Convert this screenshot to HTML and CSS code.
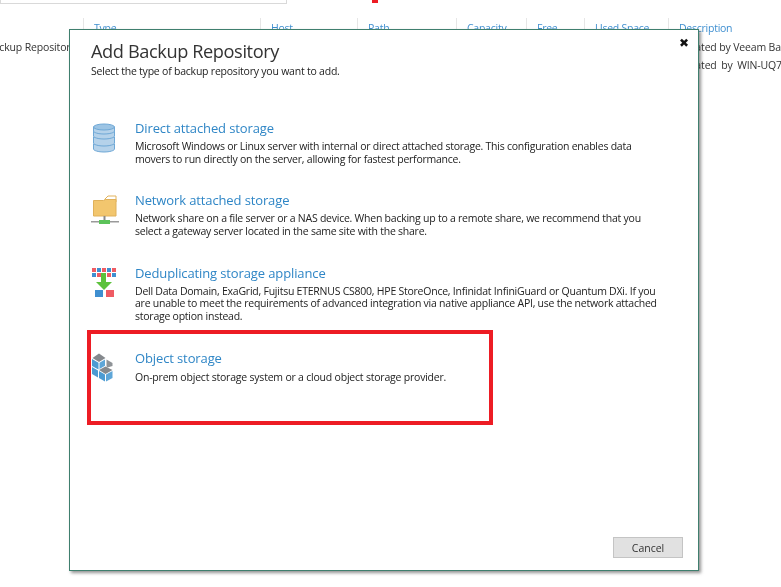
FILE: index.html
```html
<!DOCTYPE html>
<html lang="en">
<head>
<meta charset="utf-8">
<title>Add Backup Repository</title>
<link rel="stylesheet" href="styles.css">
</head>
<body>
<div class="page">
  <div class="topbar">
    <div class="search"></div>
    <div class="mark"></div>
  </div>
  <div class="table">
    <div class="head">
      <div class="spacer"></div>
      <div class="th">Type</div>
      <div class="th">Host</div>
      <div class="th">Path</div>
      <div class="th">Capacity</div>
      <div class="th">Free</div>
      <div class="th">Used Space</div>
      <div class="th">Description</div>
    </div>
    <div class="row">
      <div class="name">Backup Repository</div>
      <div class="desc-cell">Created by Veeam Backup</div>
    </div>
    <div class="row">
      <div class="name"></div>
      <div class="desc-cell wide">Created by WIN-UQ7</div>
    </div>
  </div>

  <div class="dialog">
    <div class="close">&#10006;</div>
    <h1 class="title">Add Backup Repository</h1>
    <p class="subtitle">Select the type of backup repository you want to add.</p>

    <div class="options">
      <div class="option">
        <svg class="icon" width="28" height="30" viewBox="0 0 28 30">
          <g fill="#b5d2ea" stroke="#6fa8d6" stroke-width="1">
            <path d="M2.500 21v5c0 1.600 4.800 3 10.500 3s10.500-1.400 10.500-3v-5z"/>
            <path d="M2.500 14v6c0 1.600 4.800 3 10.500 3s10.500-1.400 10.500-3v-6z"/>
            <path d="M2.500 7v6c0 1.600 4.800 3 10.500 3s10.500-1.400 10.500-3V7z"/>
            <path d="M2.500 4v4c0 1.600 4.800 3 10.500 3s10.500-1.400 10.500-3V4z"/>
            <ellipse cx="13" cy="4" rx="10.500" ry="3" fill="#9cc4e4"/>
          </g>
        </svg>
        <div class="text">
          <div class="name-link">Direct attached storage</div>
          <p class="desc">Microsoft Windows or Linux server with internal or direct attached storage. This configuration enables data<br>movers to run directly on the server, allowing for fastest performance.</p>
        </div>
      </div>

      <div class="option">
        <svg class="icon" width="28" height="30" viewBox="0 0 28 30">
          <path d="M14 4l3-3h8v6H14z" fill="#fff" stroke="#e2b35c" stroke-width="1"/>
          <path d="M2.500 5.500h10l2-1h10.500v16.500H2.500z" fill="#f2c66e" stroke="#e0b15a" stroke-width="1"/>
          <rect x="0" y="26" width="28" height="1.500" fill="#9a9a9a"/>
          <rect x="12.500" y="21" width="2" height="5" fill="#8a8a8a"/>
          <rect x="8" y="25" width="11" height="4" fill="#5cc35a"/>
        </svg>
        <div class="text">
          <div class="name-link">Network attached storage</div>
          <p class="desc">Network share on a file server or a NAS device. When backing up to a remote share, we recommend that you<br>select a gateway server located in the same site with the share.</p>
        </div>
      </div>

      <div class="option">
        <svg class="icon" width="28" height="30" viewBox="0 0 28 30">
          <g fill="#ef5b63">
            <rect x="1" y="0" width="4" height="4"/><rect x="11" y="0" width="4" height="4"/><rect x="21" y="0" width="4" height="4"/>
            <rect x="6" y="5" width="4" height="4"/><rect x="16" y="5" width="4" height="4"/>
            <rect x="15" y="22" width="8" height="7"/>
          </g>
          <g fill="#3f8fd0">
            <rect x="6" y="0" width="4" height="4"/><rect x="16" y="0" width="4" height="4"/>
            <rect x="1" y="5" width="4" height="4"/><rect x="11" y="5" width="4" height="4"/><rect x="21" y="5" width="4" height="4"/>
            <rect x="4" y="22" width="8" height="7"/>
          </g>
          <path d="M10 5h5v9h6l-8 8L5 14h5z" fill="#5cc23c"/>
        </svg>
        <div class="text">
          <div class="name-link">Deduplicating storage appliance</div>
          <p class="desc">Dell Data Domain, ExaGrid, Fujitsu ETERNUS CS800, HPE StoreOnce, Infinidat InfiniGuard or Quantum DXi. If you<br>are unable to meet the requirements of advanced integration via native appliance API, use the network attached<br>storage option instead.</p>
        </div>
      </div>

      <div class="option">
        <svg class="icon" width="28" height="30" viewBox="0 0 28 30">
          <path d="M8 0.500L14.500 5 8 9 1.500 5z" fill="#85898d"/>
          <path d="M1 6l6.500 3.700v6.800L1 13z" fill="#4d9bd2"/>
          <path d="M14 6.500L8.500 9.700v6.300L14 12.800z" fill="#5ea6d8"/>
          <path d="M15.500 6.500L21.500 10v3l-5 1.500-1-1z" fill="#8f9397"/>
          <path d="M14.500 13.500L21.500 17l-7 4-6.500-4z" fill="#85898d"/>
          <path d="M8 18l6 3.500v7L8 25z" fill="#4d9bd2"/>
          <path d="M21.500 18l-6.500 3.500v7l6.500-3.500z" fill="#5ea6d8"/>
          <path d="M1 14l6 3.500V24.500L1 21z" fill="#4d9bd2"/>
        </svg>
        <div class="text">
          <div class="name-link">Object storage</div>
          <p class="desc last">On-prem object storage system or a cloud object storage provider.</p>
        </div>
      </div>
    </div>

    <div class="footer">
      <button class="cancel" type="button">Cancel</button>
    </div>
    <div class="highlight"></div>
  </div>
</div>
</body>
</html>
```
FILE: styles.css
```css
* { box-sizing: border-box; }
html, body { margin: 0; padding: 0; background: #fff; }
body {
  font-family: "Open Sans", "Noto Sans", sans-serif;
  color: #2b2b2b;
}
.page {
  position: relative;
  width: 781px;
  height: 587px;
  overflow: hidden;
  background: #fff;
  filter: blur(0.35px);
}
.topbar {
  display: flex;
  height: 18px;
}
.search {
  width: 287px;
  height: 4px;
  border: 1px solid #d9d9d9;
  border-top: 0;
  background: #fff;
}
.mark {
  width: 6px;
  height: 3px;
  margin-left: 85px;
  background: #ed1c24;
}
.table { display: flex; flex-direction: column; }
.head {
  display: grid;
  grid-template-columns: 83px 177px 97px 99px 70px 58px 84px 1fr;
  height: 20px;
}
.th {
  padding: 3px 0 0 10px;
  border-left: 1px solid #e6e6e6;
  font-size: 10.5px;
  letter-spacing: -0.25px;
  line-height: 15px;
  color: #3f8fd0;
  white-space: nowrap;
}
.row {
  display: flex;
  height: 18px;
  align-items: center;
  font-size: 10.5px;
  letter-spacing: -0.15px;
  color: #333;
}
.name {
  flex: none;
  width: 679px;
  white-space: nowrap;
  text-indent: -13px;
}
.desc-cell { flex: none; white-space: nowrap; }
.wide { word-spacing: 2px; }
.dialog {
  position: absolute;
  left: 69px;
  top: 29px;
  width: 630px;
  height: 542px;
  display: flex;
  flex-direction: column;
  padding: 10px 15px 12px 21px;
  background: #fff;
  border: 1px solid #3f7f6e;
  box-shadow: 2px 2px 3px rgba(60, 60, 60, 0.55);
}
.close {
  position: absolute;
  top: 5px;
  right: 9px;
  font-family: "DejaVu Sans", sans-serif;
  font-size: 12px;
  line-height: 16px;
  color: #111;
}
.title {
  margin: 0;
  font-size: 18.2px;
  font-weight: 400;
  line-height: 22px;
  letter-spacing: -0.4px;
  color: #333;
}
.subtitle {
  margin: 3px 0 0;
  font-size: 10.5px;
  line-height: 13px;
  letter-spacing: -0.22px;
  color: #222;
}
.options {
  display: flex;
  flex-direction: column;
  gap: 25.700px;
  margin-top: 41px;
  flex: 1;
}
.option {
  display: flex;
  gap: 16px;
}
.icon {
  flex: none;
  width: 28px;
  height: 30px;
  margin-top: 4px;
}
.text { min-width: 0; }
.name-link {
  font-size: 13px;
  line-height: 18px;
  letter-spacing: -0.12px;
  color: #2f86c6;
}
.desc {
  margin: 3px 0 0;
  font-size: 10.5px;
  line-height: 12.800px;
  letter-spacing: -0.24px;
  color: #222;
  white-space: nowrap;
}
.desc.last {
  margin-top: 4px;
  letter-spacing: -0.21px;
}
.footer {
  display: flex;
  justify-content: flex-end;
}
.cancel {
  width: 70px;
  height: 21px;
  padding: 0;
  border: 1px solid #c4c4c4;
  background: #e1e1e1;
  font-family: inherit;
  font-size: 10.5px;
  color: #333;
}
.highlight {
  position: absolute;
  left: 17px;
  top: 300px;
  width: 406px;
  height: 95px;
  border: 4px solid #ed1c24;
}
```
